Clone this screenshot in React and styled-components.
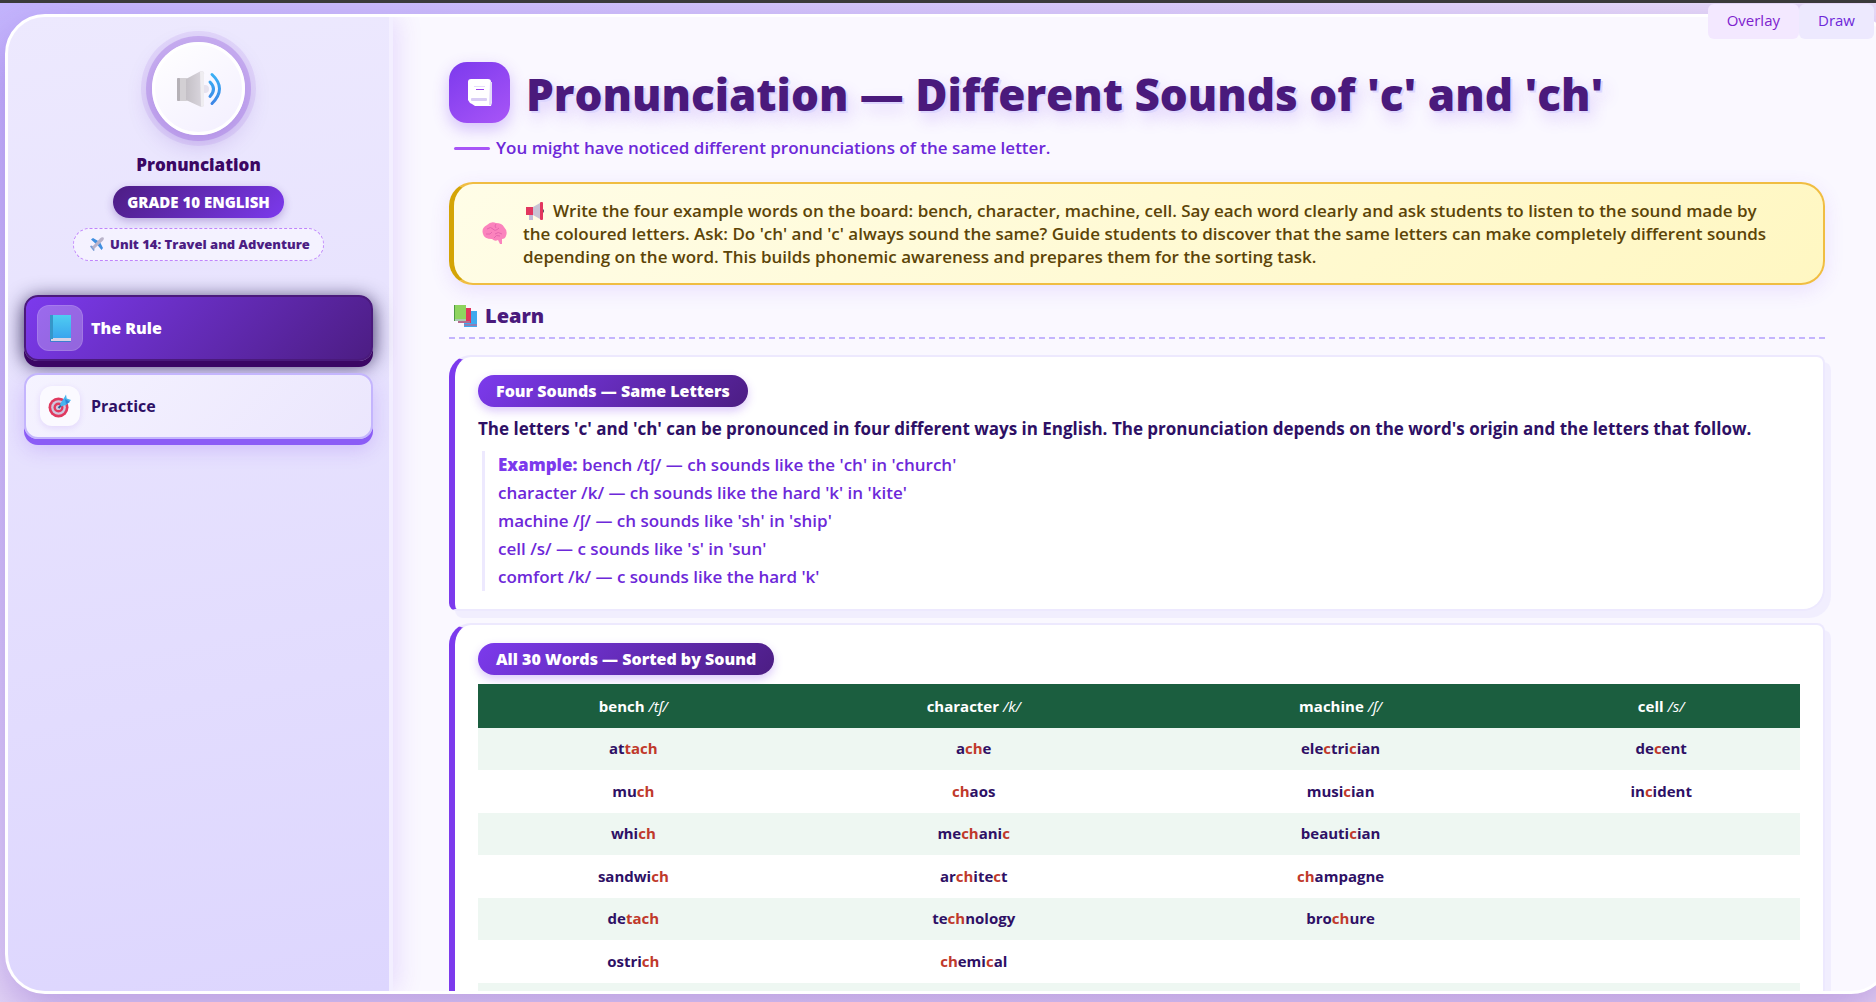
import React from "react";
import styled, { createGlobalStyle } from "styled-components";

const bodyFont = '"Open Sans", "Noto Sans", sans-serif';
const displayFont = '"Open Sans", "Noto Sans", sans-serif';

const GlobalStyle = createGlobalStyle`
  *, *::before, *::after { box-sizing: border-box; }
  html, body, #root { height: 100%; }
  body {
    margin: 0;
    overflow: hidden;
    font-family: ${bodyFont};
    color: #2e1065;
  }
  button { font-family: inherit; cursor: pointer; }
  h1, h2, h3, p { margin: 0; }
`;

const Page = styled.div`
  height: 100vh;
  overflow: hidden;
  border-top: 3px solid #3a3a3a;
  padding: 11px 0 8px 5px;
  background: linear-gradient(150deg, #c4b5fd 0%, #e9ddf8 50%, #ecdcf5 100%);
`;

const Frame = styled.div`
  display: flex;
  width: calc(100vw + 10px);
  height: 100%;
  border: 3px solid #fff;
  border-radius: 40px;
  overflow: hidden;
  background: #faf8ff;
  box-shadow: 0 20px 50px rgba(91, 33, 182, 0.34);
`;

const Sidebar = styled.aside`
  flex: 0 0 385px;
  display: flex;
  flex-direction: column;
  align-items: center;
  padding: 25px 16px;
  border-right: 4px solid #f3efff;
  background: linear-gradient(170deg, #ede9fe 0%, #ddd6fe 100%);
  box-shadow: 4px 0 24px rgba(124, 58, 237, 0.16);
  z-index: 1;
`;

const Logo = styled.div`
  display: grid;
  place-items: center;
  width: 93px;
  height: 93px;
  border: 3px solid #fff;
  border-radius: 50%;
  background: linear-gradient(145deg, #ffffff, #f3efff);
  box-shadow: 0 0 0 6px rgba(147, 91, 222, 0.32), 0 0 0 11px rgba(147, 91, 222, 0.12),
    0 8px 24px rgba(91, 33, 182, 0.26);
`;

const LessonName = styled.h2`
  margin-top: 18px;
  font-family: ${displayFont};
  font-size: 17px;
  line-height: 24px;
  font-weight: 800;
  color: #3b0764;
`;

const GradeBadge = styled.span`
  margin-top: 9px;
  padding: 0 14px;
  border-radius: 16px;
  font-size: 15px;
  line-height: 32px;
  font-weight: 800;
  color: #fff;
  background: linear-gradient(135deg, #4c1d83, #7c3aed);
  box-shadow: 0 3px 8px rgba(76, 29, 149, 0.3);
`;

const UnitBadge = styled.span`
  display: flex;
  align-items: center;
  gap: 6px;
  margin-top: 10px;
  height: 33px;
  padding: 0 13px 2px 16px;
  border: 1px dashed #c084fc;
  border-radius: 17px;
  font-size: 13px;
  font-weight: 800;
  color: #4c1d83;
  background: rgba(255, 255, 255, 0.5);
`;

const Nav = styled.nav`
  align-self: stretch;
  display: flex;
  flex-direction: column;
  gap: 12px;
  margin-top: 34px;
`;

const NavButton = styled.button`
  display: flex;
  align-items: center;
  gap: ${(p) => (p.$active ? 8 : 11)}px;
  height: 66px;
  padding: 0 ${(p) => (p.$active ? 11 : 14)}px;
  border: 2px solid ${(p) => (p.$active ? "#4a1a7c" : "#c4b5fd")};
  border-radius: 14px;
  font-size: 16px;
  font-weight: ${(p) => (p.$active ? 800 : 700)};
  color: ${(p) => (p.$active ? "#fff" : "#2e1065")};
  background: ${(p) =>
    p.$active
      ? "linear-gradient(135deg, #7c3aed, #4c1d83)"
      : "linear-gradient(135deg, #f5f3ff, #ebe6fd)"};
  box-shadow: ${(p) =>
    p.$active
      ? "0 6px 0 #3b0764, 0 4px 20px rgba(15, 5, 60, 0.85)"
      : "0 6px 0 #8b5cf6, 0 10px 20px rgba(124, 58, 237, 0.22)"};
`;

const NavIcon = styled.span`
  display: grid;
  place-items: center;
  width: ${(p) => (p.$active ? 46 : 40)}px;
  height: ${(p) => (p.$active ? 46 : 40)}px;
  border-radius: 12px;
  border: ${(p) => (p.$active ? "1px solid rgba(255,255,255,.12)" : "0")};
  background: ${(p) => (p.$active ? "rgba(255, 255, 255, 0.25)" : "#fbfaff")};
  box-shadow: ${(p) => (p.$active ? "none" : "0 2px 6px rgba(124, 58, 237, 0.14)")};
`;

const Main = styled.main`
  flex: 1;
  min-width: 0;
  overflow: hidden;
  padding: 45px 63px 0 56px;
`;

const TitleRow = styled.header`
  display: flex;
  align-items: center;
  gap: 16px;
  height: 61px;
`;

const TitleIcon = styled.span`
  flex: none;
  display: grid;
  place-items: center;
  width: 61px;
  height: 61px;
  border-radius: 18px;
  background: linear-gradient(145deg, #7c3aed, #a855f7);
  box-shadow: 0 6px 16px rgba(124, 58, 237, 0.3);
`;

const Title = styled.h1`
  padding-top: 3px;
  font-family: ${displayFont};
  font-size: 44px;
  line-height: 60px;
  font-weight: 800;
  white-space: nowrap;
  color: #4a1a7c;
  text-shadow: 2px 2px 0 #ddd6fe, 4px 8px 16px rgba(124, 58, 237, 0.22);
`;

const Subtitle = styled.p`
  display: flex;
  align-items: center;
  gap: 6px;
  margin: 13px 0 0 5px;
  font-size: 17px;
  line-height: 24px;
  font-weight: 600;
  color: #6d28d9;
  &::before {
    content: "";
    width: 36px;
    height: 3px;
    border-radius: 2px;
    background: #a855f7;
  }
`;

const Note = styled.section`
  display: flex;
  align-items: center;
  gap: 16px;
  height: 103px;
  margin-top: 22px;
  padding: 0 20px 0 28px;
  border: 2px solid #f0bd42;
  border-left: 5px solid #d4a406;
  border-radius: 24px;
  background: linear-gradient(135deg, #fffde7, #fff7c2);
  box-shadow: 0 6px 20px rgba(124, 58, 237, 0.12);
  > svg { flex: none; }
`;

const NoteText = styled.p`
  font-size: 17px;
  line-height: 23px;
  font-weight: 650;
  white-space: nowrap;
  color: #5c4407;
  svg { vertical-align: -3px; margin: 0 8px 0 3px; }
`;

const SectionTitle = styled.h2`
  display: flex;
  align-items: center;
  gap: 8px;
  height: 54px;
  padding: 9px 0 0 5px;
  border-bottom: 2px dashed #c4b5fd;
  font-family: ${displayFont};
  font-size: 20px;
  font-weight: 800;
  color: #4a1a7c;
`;

const Card = styled.section`
  margin-top: ${(p) => p.$gap}px;
  padding: 18px 23px;
  border: 2px solid #ede9fe;
  border-left: 6px solid #7c3aed;
  border-radius: 22px 8px 22px 8px;
  background: #fff;
  box-shadow: 6px 7px 0 rgba(237, 233, 254, 0.7);
`;

const CardTitle = styled.h3`
  width: fit-content;
  padding: 0 18px;
  border-radius: 16px;
  font-family: ${displayFont};
  font-size: 16px;
  line-height: 32px;
  font-weight: 800;
  color: #fff;
  background: linear-gradient(135deg, #7c3aed, #4c1d83);
  box-shadow: 0 4px 10px rgba(124, 58, 237, 0.28);
`;

const RuleText = styled.p`
  margin-top: 8px;
  font-size: 17px;
  line-height: 28px;
  font-weight: 700;
  white-space: nowrap;
  color: #2e1065;
`;

const Examples = styled.div`
  margin: 8px 0 0 4px;
  padding-left: 13px;
  border-left: 3px solid #ede9fe;
  font-size: 17px;
  line-height: 28px;
  font-weight: 550;
  color: #6d28d9;
  strong { font-weight: 800; color: #7c3aed; }
`;

const WordTable = styled.table`
  width: 100%;
  margin-top: 9px;
  table-layout: fixed;
  border-collapse: collapse;
  font-size: 15px;
  text-align: center;
`;

const HeadCell = styled.th`
  width: ${(p) => p.$width};
  height: 44px;
  padding: 0;
  font-weight: 700;
  color: #fff;
  background: #1b5e3f;
  em { font-weight: 400; }
`;

const Row = styled.tr`
  height: ${(p) => (p.$tinted ? 42 : 43)}px;
  background: ${(p) => (p.$tinted ? "#eef7f2" : "#fff")};
`;

const Cell = styled.td`
  padding: 0 0 2px;
  font-weight: 700;
  color: #2e1065;
  mark { background: none; color: #c0392b; }
`;

const Tools = styled.div`
  position: absolute;
  top: 4px;
  right: 2px;
  display: flex;
  z-index: 2;
`;

const ToolButton = styled.button`
  height: 35px;
  padding: 0 19px 4px;
  border: 0;
  border-radius: 6px;
  font-size: 15px;
  color: ${(p) => (p.$soft ? "#6d28d9" : "#7e22ce")};
  background: ${(p) => (p.$soft ? "#ede9fe" : "#f3e8ff")};
`;

const SpeakerIcon = () => (
  <svg width="46" height="38" viewBox="0 0 46 38" aria-hidden="true">
    <defs>
      <linearGradient id="cone" x1="0" x2="1">
        <stop offset="0" stopColor="#c4c0c6" />
        <stop offset="1" stopColor="#dcd8e0" />
      </linearGradient>
      <linearGradient id="wave" x1="0" y1="0" x2="0" y2="1">
        <stop offset="0" stopColor="#3bb0f5" />
        <stop offset="1" stopColor="#3d86e6" />
      </linearGradient>
    </defs>
    <circle cx="29" cy="19" r="4" fill="#e6e2ee" />
    <rect x="1" y="8" width="11" height="23" rx="2" fill="#d3d0d4" />
    <rect x="1" y="8" width="3" height="23" rx="1" fill="#b5b1b7" />
    <path d="M10 9 24 1.500q4-1 4 2v31q0 3-4 2L10 30z" fill="url(#cone)" />
    <path d="M24 1.500q4-1 4 2v31q0 3-3 2z" fill="#efedf1" />
    <path d="M34 12q7 7 0 14.500M36 4.500q15 14 0 29" fill="none" stroke="url(#wave)" strokeWidth="3" strokeLinecap="round" />
  </svg>
);

const PlaneIcon = () => (
  <svg width="14" height="14" viewBox="0 0 14 14" aria-hidden="true">
    <path d="M1 2.500 3 1l6 3.500-3 2.500zM10 5l3 6-1.500 2L7.500 8z" fill="#3f8fe0" />
    <path d="M0 9.500 1 8.500l3 1 .500 4-1 .500L2 12z" fill="#7a9fd4" />
    <path d="M13.500.500Q12-.500 10 1.500L2 10l2 2 8.500-8Q14.500 2 13.500.500z" fill="#b9b3c9" />
  </svg>
);

const BlueBook = () => (
  <svg width="21" height="27" viewBox="0 0 21 27" aria-hidden="true">
    <defs>
      <linearGradient id="cover" x1="0" y1="0" x2="0" y2="1">
        <stop offset="0" stopColor="#4fcdf2" />
        <stop offset="1" stopColor="#3aa5ee" />
      </linearGradient>
    </defs>
    <rect x="0" y="0" width="21" height="27" rx="1" fill="#3b7fd0" />
    <rect x="1" y="23" width="20" height="3" fill="#d8d2e6" />
    <rect x="2" y="0" width="19" height="23" fill="url(#cover)" />
    <rect x="0" y="0" width="3" height="24" fill="#3597c9" />
  </svg>
);

const TargetIcon = () => (
  <svg width="24" height="24" viewBox="0 0 24 24" aria-hidden="true">
    <circle cx="10.500" cy="13.500" r="10" fill="#e0395f" />
    <circle cx="10.500" cy="13.500" r="7.300" fill="#cfc6de" />
    <circle cx="10.500" cy="13.500" r="5" fill="#e0395f" />
    <circle cx="10.500" cy="13.500" r="2.600" fill="#cfc6de" />
    <path d="m10.500 14 7-7" stroke="#2f5d96" strokeWidth="2" />
    <path d="m12 10 4-6 2-3.500.700 4L23 6l-4 4.500-6 2z" fill="#46b4ee" />
    <path d="m17 5 5 3-4 2z" fill="#2f83d8" />
  </svg>
);

const ScrollIcon = () => (
  <svg width="26" height="30" viewBox="0 0 26 30" aria-hidden="true">
    <path d="M4 1h17q3 0 3 3l1 0v20l-1 4H8L5 26l-2-1-2-3V4q0-3 3-3z" fill="#fff" />
    <path d="M23 4h2v19l-1 4h-2z" fill="#e3daf8" />
    <rect x="4" y="20" width="16" height="3" rx="1" fill="#d9cdf5" />
    <rect x="7" y="8" width="11" height="1" fill="#e5dcfa" />
    <rect x="9" y="11" width="8" height="1" fill="#9b3df0" />
  </svg>
);

const BrainIcon = () => (
  <svg width="25" height="23" viewBox="0 0 25 23" aria-hidden="true">
    <path d="M1 12Q-1 6 5 3q4-4 9-2 6 0 8 4 4 4 2 9-1 3-4 3l0 5h-2l-2-4q-3 2-6-1-8 0-9-5z" fill="#fb83bd" />
    <path d="M5 7q4-3 6 0t6-1M4 12q5 1 6-2m3 2q3-3 7 0M12 16q2-4 6-2M14 2q-2 2 0 4" fill="none" stroke="#e566ad" strokeWidth="1" />
  </svg>
);

const MegaphoneIcon = () => (
  <svg width="19" height="18" viewBox="0 0 19 18" aria-hidden="true">
    <rect x="3" y="12" width="4" height="6" fill="#c3bcd6" />
    <rect x="0" y="5" width="7" height="8" fill="#e2365f" />
    <path d="M7 5 14 1v16l-7-4z" fill="#c9c3d4" />
    <rect x="14" y="0" width="3" height="18" rx="1" fill="#e2365f" />
    <path d="M17 7q2 2 0 4z" fill="#4b4658" />
  </svg>
);

const BooksIcon = () => (
  <svg width="23" height="22" viewBox="0 0 23 22" aria-hidden="true">
    <rect x="10" y="6" width="13" height="16" fill="#3fa9ee" />
    <rect x="10" y="19" width="13" height="2" fill="#8b7fb8" />
    <rect x="4" y="3" width="13" height="15" fill="#e0355c" />
    <rect x="4" y="16" width="12" height="2" fill="#b76a8e" />
    <rect x="0" y="0" width="12" height="16" fill="#8ed45f" />
    <rect x="0" y="14" width="12" height="2" fill="#a9c9b0" />
    <rect x="0" y="0" width="1" height="16" fill="#4f9a45" />
  </svg>
);

const columns = [
  { word: "bench", sound: "/tʃ/", width: "23.5%" },
  { word: "character", sound: "/k/", width: "28%" },
  { word: "machine", sound: "/ʃ/", width: "27.5%" },
  { word: "cell", sound: "/s/", width: "21%" },
];

// Asterisks wrap the letters that carry the sound.
const rows = [
  ["at*tach*", "a*ch*e", "ele*c*tri*c*ian", "de*c*ent"],
  ["mu*ch*", "*ch*aos", "musi*c*ian", "in*c*ident"],
  ["whi*ch*", "me*ch*ani*c*", "beauti*c*ian", ""],
  ["sandwi*ch*", "ar*ch*ite*c*t", "*ch*ampagne", ""],
  ["de*tach*", "te*ch*nology", "bro*ch*ure", ""],
  ["ostri*ch*", "*ch*emi*c*al", "", ""],
  ["", "", "", ""],
];

const Word = ({ text }) =>
  text.split("*").map((part, i) => (i % 2 ? <mark key={i}>{part}</mark> : part));

export default function App() {
  return (
    <Page>
      <GlobalStyle />
      <Tools>
        <ToolButton type="button">Overlay</ToolButton>
        <ToolButton type="button" $soft>Draw</ToolButton>
      </Tools>
      <Frame>
        <Sidebar>
          <Logo><SpeakerIcon /></Logo>
          <LessonName>Pronunciation</LessonName>
          <GradeBadge>GRADE 10 ENGLISH</GradeBadge>
          <UnitBadge><PlaneIcon />Unit 14: Travel and Adventure</UnitBadge>
          <Nav>
            <NavButton type="button" $active>
              <NavIcon $active><BlueBook /></NavIcon>The Rule
            </NavButton>
            <NavButton type="button">
              <NavIcon><TargetIcon /></NavIcon>Practice
            </NavButton>
          </Nav>
        </Sidebar>
        <Main>
          <TitleRow>
            <TitleIcon><ScrollIcon /></TitleIcon>
            <Title>Pronunciation — Different Sounds of 'c' and 'ch'</Title>
          </TitleRow>
          <Subtitle>You might have noticed different pronunciations of the same letter.</Subtitle>
          <Note>
            <BrainIcon />
            <NoteText>
              <MegaphoneIcon />Write the four example words on the board: bench, character, machine, cell. Say each word clearly and ask students to listen to the sound made by<br />
              the coloured letters. Ask: Do 'ch' and 'c' always sound the same? Guide students to discover that the same letters can make completely different sounds<br />
              depending on the word. This builds phonemic awareness and prepares them for the sorting task.
            </NoteText>
          </Note>
          <SectionTitle><BooksIcon />Learn</SectionTitle>
          <Card $gap={16}>
            <CardTitle>Four Sounds — Same Letters</CardTitle>
            <RuleText>
              The letters 'c' and 'ch' can be pronounced in four different ways in English. The pronunciation depends on the word's origin and the letters that follow.
            </RuleText>
            <Examples>
              <p><strong>Example:</strong> bench /tʃ/ — ch sounds like the 'ch' in 'church'</p>
              <p>character /k/ — ch sounds like the hard 'k' in 'kite'</p>
              <p>machine /ʃ/ — ch sounds like 'sh' in 'ship'</p>
              <p>cell /s/ — c sounds like 's' in 'sun'</p>
              <p>comfort /k/ — c sounds like the hard 'k'</p>
            </Examples>
          </Card>
          <Card $gap={12}>
            <CardTitle>All 30 Words — Sorted by Sound</CardTitle>
            <WordTable>
              <thead>
                <tr>
                  {columns.map((c) => (
                    <HeadCell key={c.word} $width={c.width}>
                      {c.word} <em>{c.sound}</em>
                    </HeadCell>
                  ))}
                </tr>
              </thead>
              <tbody>
                {rows.map((row, r) => (
                  <Row key={r} $tinted={r % 2 === 0}>
                    {row.map((text, c) => (
                      <Cell key={c}><Word text={text} /></Cell>
                    ))}
                  </Row>
                ))}
              </tbody>
            </WordTable>
          </Card>
        </Main>
      </Frame>
    </Page>
  );
}
